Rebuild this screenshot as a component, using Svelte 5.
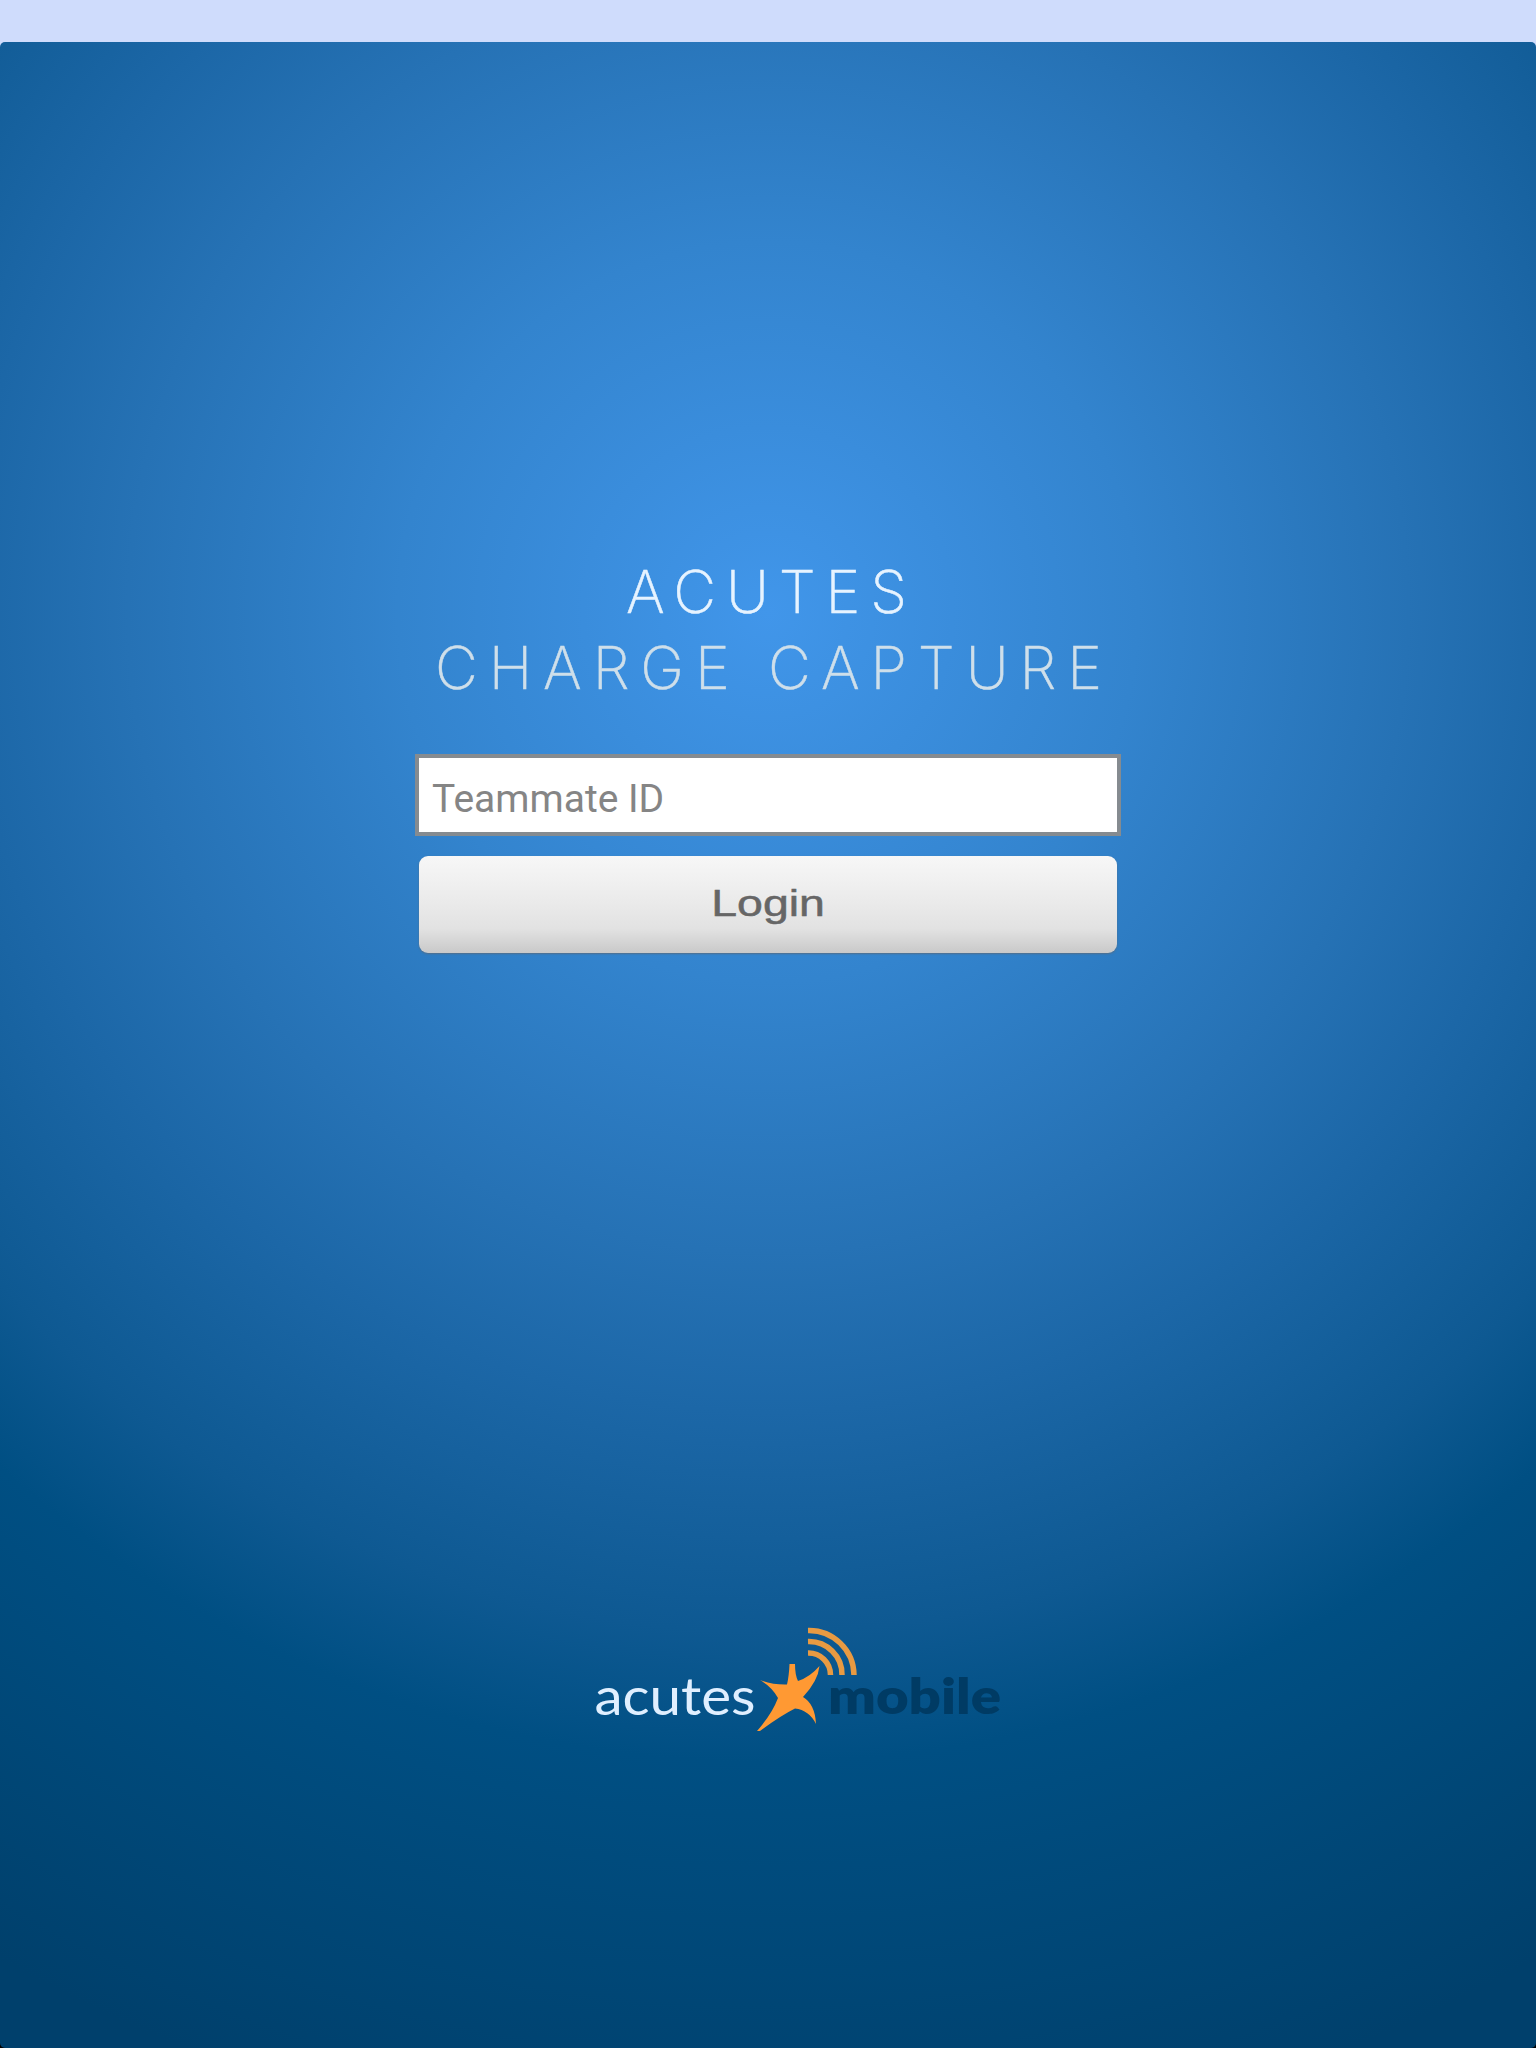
<script lang="ts">
  let teammateId = $state('');
</script>

<div class="screen">
  <div class="status"></div>
  <main>
    <h1>
      <svg viewBox="0 0 700 180" role="img" aria-label="Acutes Charge Capture">
        <text x="208" y="75" textLength="281">ACUTES</text>
        <text class="second" x="17" y="151" textLength="667">CHARGE CAPTURE</text>
      </svg>
    </h1>
    <form onsubmit={(e) => e.preventDefault()}>
      <input placeholder="Teammate ID" bind:value={teammateId} />
      <button type="submit"><span>Login</span></button>
    </form>
    <footer>
      <svg viewBox="0 0 440 160">
        <text class="acutes" x="14.500" y="115.500" textLength="161" lengthAdjust="spacingAndGlyphs">acutes</text>
        <text class="mobile" x="248" y="114.500" textLength="173" lengthAdjust="spacingAndGlyphs">mobile</text>
        <path class="star" d="M209.500 65H215Q215 76 218 82Q230 78 239.500 67Q238 82 223 98Q235 105 236 125Q229 111 215 109.500Q200 117 180 132H177Q192 115 198 99Q192 88 180 81Q194 86 207 85.500Q209 77 209.500 65Z" />
        <path class="wave" d="M228 31.500A45 45 0 0 1 274 76M228 42.500A33 33 0 0 1 262 76M228 54A22 22 0 0 1 250.500 76" />
      </svg>
    </footer>
  </main>
</div>

<style>
  :global(body) { margin: 0; background: #000; }
  .screen {
    width: 1536px;
    height: 2048px;
    display: flex;
    flex-direction: column;
    background: linear-gradient(#cfdcfc 50%, #000 50%);
    overflow: hidden;
  }
  .status { height: 42px; }
  main {
    flex: 1;
    display: flex;
    flex-direction: column;
    align-items: center;
    border-radius: 5px;
    background: radial-gradient(circle at 768px 570px, #4196ea 0, #3384ce 370px, #2672b5 640px, #1c67a7 800px, #0e5992 1020px, #004f83 1150px, #00406c 1550px);
  }
  h1 { margin: 496px 0 0; width: 700px; height: 180px; }
  h1 svg { display: block; width: 700px; height: 180px; }
  h1 text { font: 200 59px Inter, sans-serif; fill: #e6f3ff; stroke: #e6f3ff; stroke-width: 0.5; }
  h1 .second { fill: #cfdfea; stroke: #cfdfea; }
  form { width: 706px; margin-top: 36px; display: flex; flex-direction: column; align-items: center; gap: 20px; }
  input {
    box-sizing: border-box;
    width: 706px;
    height: 82px;
    padding: 7px 13px 0;
    border: 4px solid #858b90;
    border-radius: 0;
    background: #fff;
    color: #555;
    font: 400 39px Roboto, sans-serif;
    outline: 0;
  }
  input::placeholder { color: #858585; opacity: 1; }
  button {
    width: 698px;
    height: 97px;
    padding: 0;
    border: 0;
    border-radius: 9px;
    background: linear-gradient(#f7f7f7, #ebebeb 45%, #e2e2e2 75%, #c9c9c9);
    box-shadow: 0 1px 2px #546f88;
    color: #666;
    font: 400 36px "Liberation Sans", sans-serif;
  }
  button span { display: inline-block; transform: translateY(-1px) scaleX(1.29); -webkit-text-stroke: 0.5px #666; }
  footer { margin-top: 646px; width: 440px; height: 160px; align-self: flex-start; margin-left: 580px; }
  footer svg { display: block; width: 440px; height: 160px; }
  .acutes { font: 400 52px Lato, sans-serif; fill: #e0efff; }
  .mobile { font: 800 49px Lato, sans-serif; fill: #003b64; }
  .star { fill: #ff9933; }
  .wave { fill: none; stroke: #e89a42; stroke-width: 5.5; }
</style>
